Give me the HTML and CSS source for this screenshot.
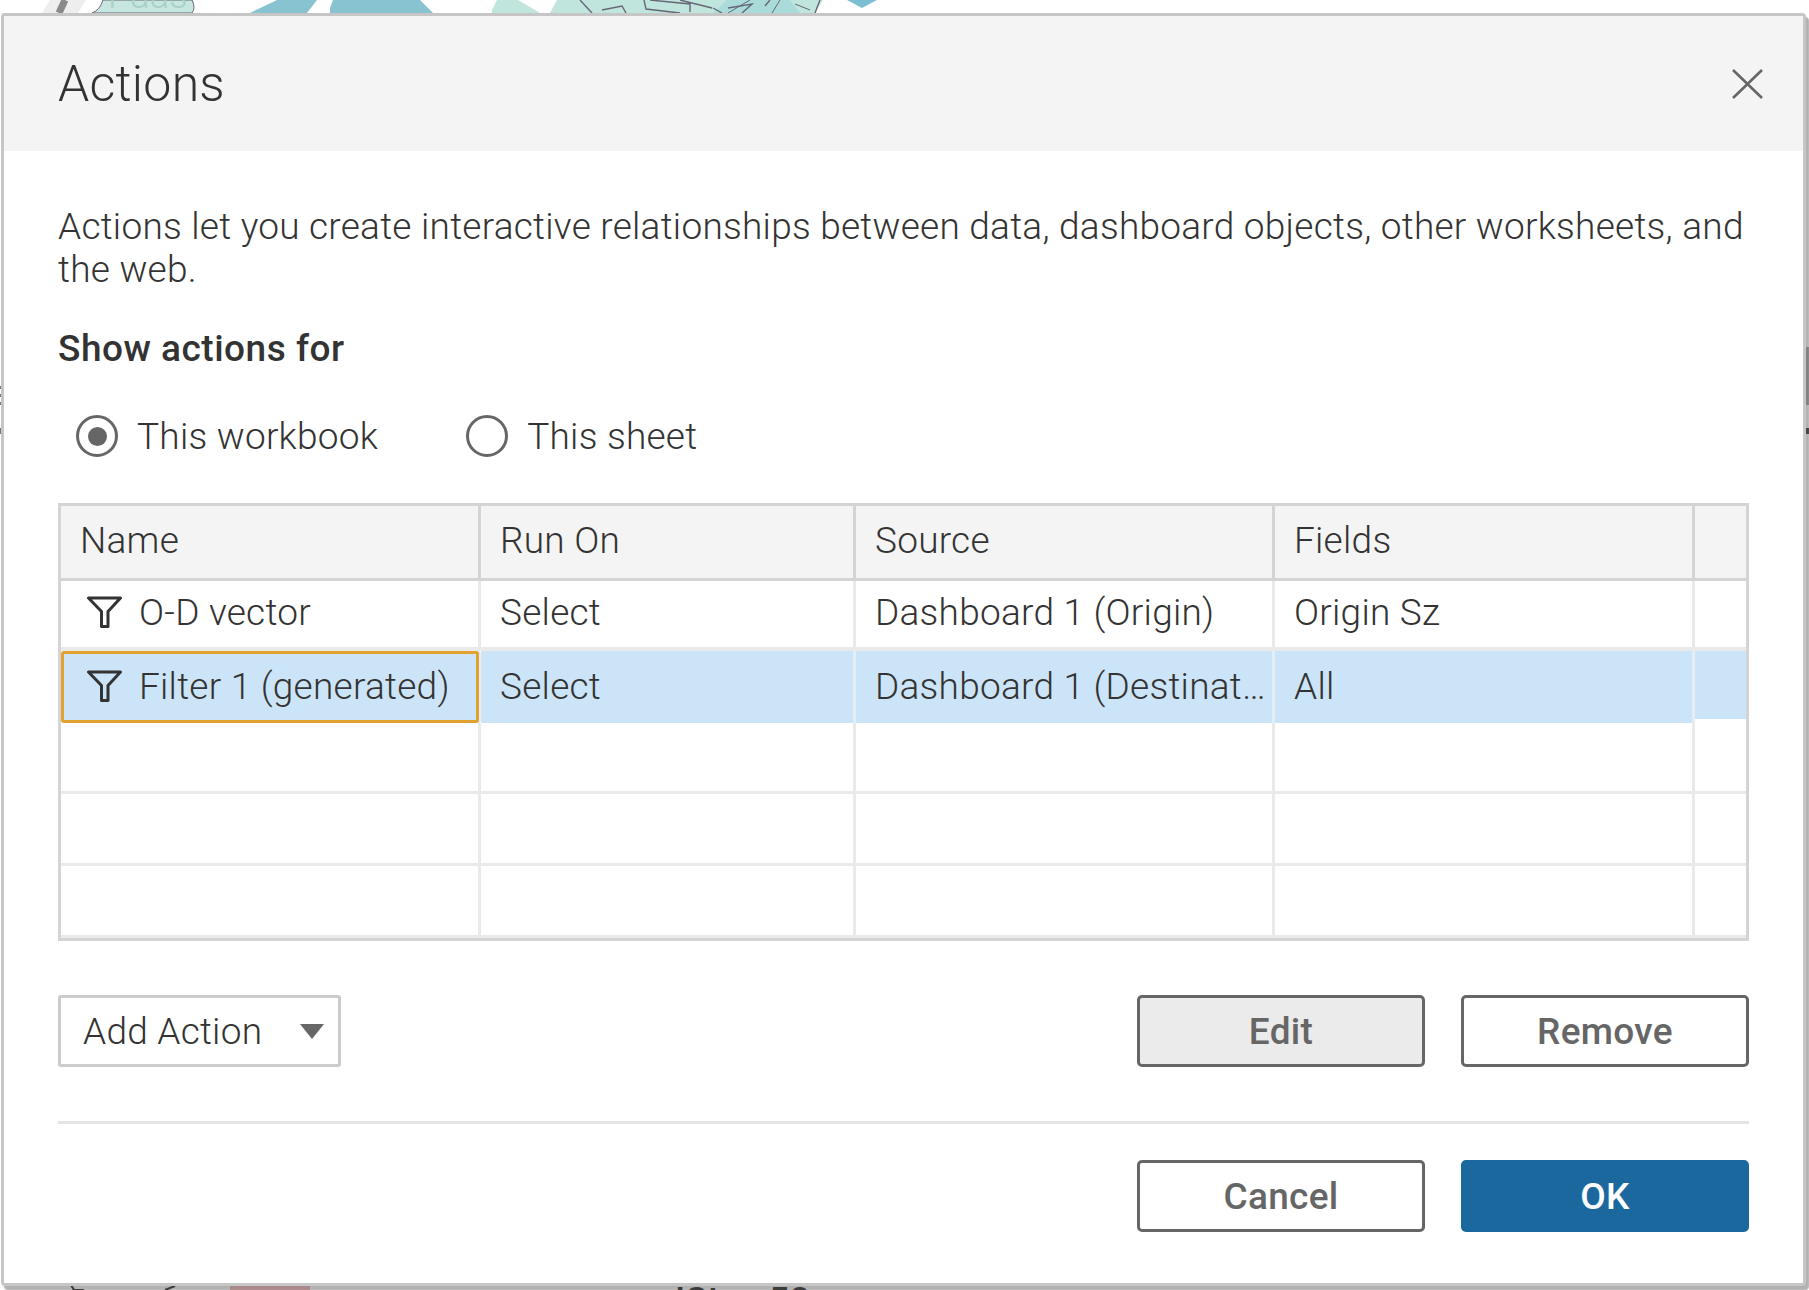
FILE: index.html
```html
<!DOCTYPE html>
<html lang="en">
<head>
    <meta charset="UTF-8">
    <title>Actions</title>
    <link rel="stylesheet" href="styles.css">
</head>
<body>
<svg class="backdrop" width="1809" height="1290" viewBox="0 0 1809 1290">
    <path d="M42 13 L50 0 H86 L78 13Z" fill="#eee"/>
    <path d="M59 13 L65 0" stroke="#8a8a8a" stroke-width="7" fill="none"/>
    <path d="M92 13 Q100 10 103 0 H192 Q196 8 192 13Z" fill="#c6e6df" stroke="#667" stroke-width="1"/>
    <text x="108" y="8" class="map-label">Paas</text>
    <path d="M250 13 L277 0 H317 L307 13Z" fill="#87c3d0"/>
    <path d="M330 13 V8 L333 0 H420 L433 13Z" fill="#87c3d0"/>
    <path d="M492 10 L497 0 H518 L540 13 H492Z" fill="#bfe5dd"/>
    <path d="M550 13 L557 0 H823 L815 13Z" fill="#bfe5dd"/>
    <path d="M713 13 L727 0 H790 L800 13Z" fill="#a9dcd9"/>
    <path d="M750 0 L728 13 M780 0 L772 13 M795 4 L810 10" stroke="#667" fill="none"/>
    <path d="M847 0 H877 L862 8Z" fill="#7cbfd2"/>
    <path d="M580 0 L592 13 M602 10 L622 6 L626 13 M644 0 L646 9 L680 13 M650 0 L690 4 L690 12 M680 0 L712 8 M713 8 L722 13 M728 8 L752 4 L742 13 M770 0 L765 6 M820 0 L815 13" stroke="#667" stroke-width="1.4" fill="none"/>
    <rect x="230" y="1280" width="80" height="10" fill="#f3c4c7"/>
    <path d="M71 1285 L74 1290 H84 M165 1290 L175 1286" stroke="#555" stroke-width="2" fill="none"/>
    <text x="675" y="1313" class="map-label map-label-dark">IStan 58</text>
    <rect x="1806" y="347" width="3" height="58" fill="#bbb"/>
    <rect x="1806" y="428" width="3" height="6" fill="#666"/>
    <rect x="0" y="386" width="1" height="3" fill="#777"/>
    <rect x="0" y="394" width="1" height="3" fill="#777"/>
    <rect x="0" y="402" width="1" height="3" fill="#777"/>
    <rect x="0" y="428" width="1" height="6" fill="#777"/>
</svg>

<div class="dialog">
    <div class="dialog-head">
        <h1>Actions</h1>
        <svg class="close" width="31" height="30" viewBox="0 0 31 30">
            <path d="M1 1 L30 29 M30 1 L1 29" stroke="#666" stroke-width="2.6" fill="none"/>
        </svg>
    </div>
    <div class="dialog-body">
        <p class="intro">Actions let you create interactive relationships between data, dashboard objects, other worksheets, and the web.</p>
        <h2>Show actions for</h2>
        <div class="radios">
            <label class="radio"><span class="dot on"></span>This workbook</label>
            <label class="radio"><span class="dot"></span>This sheet</label>
        </div>

        <div class="grid">
            <div class="cell head">Name</div>
            <div class="cell head">Run On</div>
            <div class="cell head">Source</div>
            <div class="cell head">Fields</div>
            <div class="cell head end"></div>

            <div class="cell first">
                <svg class="funnel" width="35" height="33" viewBox="0 0 35 33"><path d="M1.5 2 H33.5 L21 15.5 V30.5 H14.5 V15.5Z" fill="none" stroke="#333" stroke-width="3" stroke-linejoin="round"/></svg>
                O-D vector
            </div>
            <div class="cell first">Select</div>
            <div class="cell first">Dashboard 1 (Origin)</div>
            <div class="cell first">Origin Sz</div>
            <div class="cell first end"></div>

            <div class="cell sel focus">
                <svg class="funnel" width="35" height="33" viewBox="0 0 35 33"><path d="M1.5 2 H33.5 L21 15.5 V30.5 H14.5 V15.5Z" fill="none" stroke="#333" stroke-width="3" stroke-linejoin="round"/></svg>
                Filter 1 (generated)
            </div>
            <div class="cell sel">Select</div>
            <div class="cell sel">Dashboard 1 (Destinat…</div>
            <div class="cell sel">All</div>
            <div class="cell sel end short"></div>

            <div class="cell"></div><div class="cell"></div><div class="cell"></div><div class="cell"></div><div class="cell end"></div>
            <div class="cell"></div><div class="cell"></div><div class="cell"></div><div class="cell"></div><div class="cell end"></div>
            <div class="cell"></div><div class="cell"></div><div class="cell"></div><div class="cell"></div><div class="cell end"></div>
        </div>

        <div class="row row-actions">
            <div class="select">Add Action<span class="arrow"></span></div>
            <div class="btns">
                <button class="btn btn-active">Edit</button>
                <button class="btn">Remove</button>
            </div>
        </div>
        <hr>
        <div class="row row-footer">
            <div class="btns">
                <button class="btn">Cancel</button>
                <button class="btn btn-primary">OK</button>
            </div>
        </div>
    </div>
</div>
</body>
</html>
```

FILE: styles.css
```css
*{ padding: 0; margin: 0; box-sizing: border-box;}
html,body{
    width: 1809px;
    height: 1290px;
    overflow: hidden;
    background: #fff;
}
body{
    font-family: Roboto, "Liberation Sans", sans-serif;
    font-weight: 300;
    font-size: 37px;
    letter-spacing: .25px;
    color: #333;
}
.backdrop{
    position: absolute;
    left: 0;
    top: 0;
}
.map-label{
    font-size: 36px;
    fill: #a9d1c9;
}
.map-label-dark{
    fill: #555;
    font-weight: 500;
}
.dialog{
    position: absolute;
    left: 1px;
    top: 13px;
    width: 1805px;
    height: 1273px;
    background: #fff;
    border: 3px solid #c6c6c6;
    border-radius: 4px;
    box-shadow: 3px 4px 1px rgba(0,0,0,.3);
}
.dialog-head{
    height: 135px;
    background: #f4f4f4;
    padding: 0 40px 0 54px;
    display: flex;
    align-items: center;
    justify-content: space-between;
}
h1{
    font-size: 50px;
    font-weight: 300;
}
.dialog-body{
    padding: 54px 54px 0;
}
.intro{
    line-height: 43px;
}
h2{
    font-size: 37px;
    font-weight: 500;
    letter-spacing: .5px;
    line-height: 40px;
    margin-top: 38px;
}
.radios{
    display: flex;
    gap: 88px;
    margin-top: 46px;
    padding-left: 18px;
}
.radio{
    display: flex;
    align-items: center;
    gap: 19px;
    height: 42px;
}
.dot{
    width: 42px;
    height: 42px;
    border: 3px solid #666;
    border-radius: 50%;
    display: flex;
    align-items: center;
    justify-content: center;
}
.dot.on::after{
    content: "";
    width: 19px;
    height: 19px;
    background: #666;
    border-radius: 50%;
}
.grid{
    display: grid;
    grid-template-columns: 420px 375px 419px 420px 51px;
    grid-template-rows: 75px 70px 72px 71px 72px 72px;
    width: 1691px;
    height: 438px;
    margin-top: 46px;
    border: 3px solid #d4d4d4;
}
.cell{
    display: flex;
    align-items: center;
    padding-left: 19px;
    border-right: 3px solid #eaeaea;
    border-bottom: 3px solid #eaeaea;
    white-space: nowrap;
    min-width: 0;
}
.cell.end{
    border-right: 0;
}
.cell.head{
    background: #f4f4f4;
    border-color: #d4d4d4;
    padding-bottom: 4px;
}
.cell.first{
    border-bottom-width: 4px;
    padding-bottom: 4px;
}
.cell.sel{
    background: #cce4f7;
    border-bottom: 0;
    border-right-color: #e6eef4;
    padding-bottom: 2px;
}
.cell.sel.short{
    background: linear-gradient(#cce4f7 0 68px, #fff 0);
}
.cell.focus{
    border: 3px solid #e2a22f;
    border-radius: 3px;
    padding-left: 16px;
    margin-right: 2px;
    box-shadow: 2px 0 0 #e6eef4;
}
.funnel{
    flex: none;
    margin: 0 17px 0 7px;
}
.row{
    display: flex;
    justify-content: space-between;
    align-items: center;
}
.row-actions{
    margin-top: 54px;
}
.row-footer{
    justify-content: flex-end;
    margin-top: 36px;
}
.select{
    width: 283px;
    height: 72px;
    border: 3px solid #ccc;
    border-radius: 3px;
    display: flex;
    align-items: center;
    justify-content: space-between;
    padding: 0 14px 0 22px;
}
.arrow{
    width: 0;
    height: 0;
    border-left: 12px solid transparent;
    border-right: 12px solid transparent;
    border-top: 15px solid #666;
}
.btns{
    display: flex;
    gap: 36px;
}
.btn{
    width: 288px;
    height: 72px;
    background: #fff;
    border: 3px solid #666;
    border-radius: 5px;
    font-family: inherit;
    font-size: 37px;
    letter-spacing: .3px;
    font-weight: 500;
    color: #666;
}
.btn-active{
    background: #ebebeb;
}
.btn-primary{
    background: #1b689f;
    border-color: #1b689f;
    color: #fff;
}
hr{
    border: 0;
    height: 3px;
    background: #e4e4e4;
    margin-top: 54px;
}
```
